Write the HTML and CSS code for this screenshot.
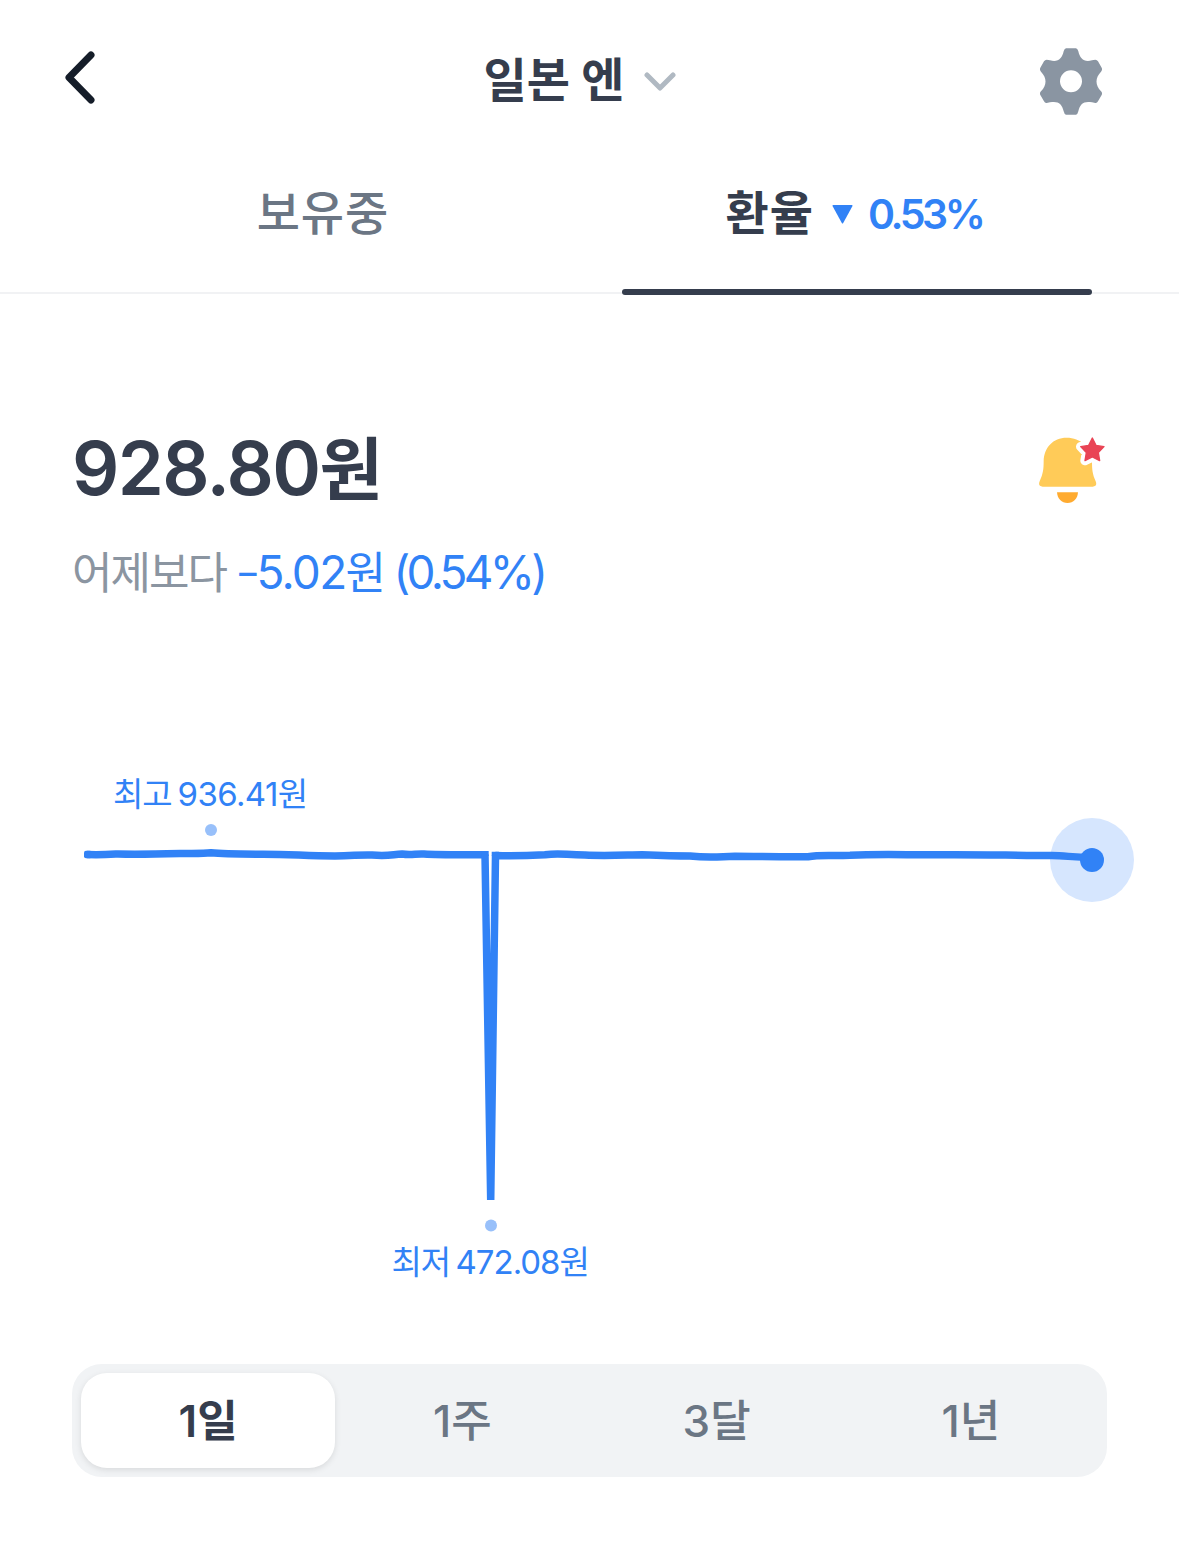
FILE: index.html
```html
<!DOCTYPE html>
<html lang="ko">
<head>
    <meta charset="UTF-8">
    <meta name="viewport" content="width=device-width, initial-scale=1.0">
    <title>일본 엔 환율</title>
    <link rel="stylesheet" href="styles.css">
</head>
<body>
    <header class="header">
        <svg class="back" viewBox="0 0 36 56">
            <path d="M28 5 L6 27.500 L28 50"/>
        </svg>
        <div class="title">
            <h1>일본 엔</h1>
            <svg class="chevron" viewBox="0 0 32 20">
                <path d="M3 3 L16 16 L29 3"/>
            </svg>
        </div>
        <svg class="gear" viewBox="60 56 186 199">
            <path fill-rule="evenodd" d="M138 56 H168 Q173 57 175 65 C180 88 192 98 216 92 L226 90 Q231 90 234 95 L245 114 Q248 120 243 126 C225 145 225 166 243 185 Q248 190 245 196 L234 215 Q231 221 226 220 L216 218 C192 213 180 222 175 245 Q173 254 168 255 H138 Q133 254 131 245 C126 222 114 213 90 218 L80 220 Q75 221 72 215 L61 196 Q58 190 63 185 C81 166 81 145 63 126 Q58 120 61 114 L72 95 Q75 90 80 90 L90 92 C114 98 126 88 131 65 Q133 57 138 56 Z M153 122 A33 33 0 1 0 153 188 A33 33 0 1 0 153 122 Z"/>
        </svg>
    </header>

    <nav class="tabs">
        <div class="tab"><span class="name">보유중</span></div>
        <div class="tab active">
            <span class="name">환율</span>
            <svg class="down" viewBox="0 0 20 19">
                <path d="M0.500 0 H19.500 Q20.300 0.300 20 1 L10.700 18 Q10 19 9.300 18 L0 1 Q-0.300 0.300 0.500 0 Z"/>
            </svg>
            <span class="rate">0.53%</span>
        </div>
    </nav>

    <main>
        <section class="summary">
            <div>
                <div class="price"><span class="num">928.80</span>원</div>
                <div class="diff">어제보다 <span class="blue"><span class="minus">−</span><span class="num">5.02</span>원 <span class="percent">(0.54%)</span></span></div>
            </div>
            <svg class="bell" viewBox="54 48 204 204">
                <path class="bell-body" d="M140 53 C99 53 72 83 71 123 C71 149 69 161 59 184 Q53 199 68 200 H218 Q233 199 227 184 C217 161 216 149 216 123 C215 83 181 53 140 53 Z"/>
                <path class="bell-clapper" d="M111 217 H174 C173 237 160 249 142.500 249 C125 249 112 237 111 217 Z"/>
                <path class="star-edge" d="M217 54 L228 76 L252 80 L235 98 L239 122 L217 111 L195 122 L199 98 L182 80 L206 76 Z"/>
                <path class="star" d="M217 54 L228 76 L252 80 L235 98 L239 122 L217 111 L195 122 L199 98 L182 80 L206 76 Z"/>
            </svg>
        </section>

        <svg class="chart" viewBox="0 760 1179 540">
            <circle class="halo" cx="1092" cy="860" r="42"/>
            <path class="line" d="M87 854.500 C100 855 108 854.500 118 854 C140 854.500 160 854 180 853.500 C192 853.200 202 853.700 211 852.700 C222 853.700 240 854 260 854.200 C290 854 305 856 335 856 C352 856 360 854.500 372 855 C388 856.500 392 854.500 402 854 C412 855.500 415 853.500 424 854 C440 855 460 854.700 485 854.700 L490.700 1200 L495.500 855.500 C515 856 530 855.500 545 854.800 C560 852.500 565 855 585 855 C605 856 625 855 642 854.800 C660 855.500 675 856 690 856 C710 858 720 856.500 735 856.300 C765 856.500 785 857 808 856.700 C820 854.500 830 856 850 855.200 C880 853.800 910 855 940 854.700 C980 854.300 1015 855.500 1052 855.500 C1066 855.500 1072 857.500 1092 857.500"/>
            <rect class="line-cap" x="84" y="850.800" width="8" height="7.500" rx="2"/>
            <path class="line-cap" d="M481.300 851 H488.700 V856 H481.300 Z M491.700 851.800 H499 V856 H491.700 Z"/>
            <circle class="now" cx="1092" cy="860" r="12"/>
            <circle class="point" cx="211" cy="830" r="6"/>
            <circle class="point" cx="491" cy="1225.500" r="6"/>
            <text x="113" y="805.500">최고 <tspan class="high" dx="-2.500">936.41</tspan>원</text>
            <text x="391.500" y="1273.500">최저 <tspan dx="-3">472.08</tspan>원</text>
        </svg>

        <div class="periods">
            <div class="period selected">1일</div>
            <div class="period">1주</div>
            <div class="period">3달</div>
            <div class="period">1년</div>
        </div>
    </main>
</body>
</html>
```

FILE: styles.css
```css
* {
    box-sizing: border-box;
}

body {
    font-family: Inter, 'Noto Sans CJK KR', sans-serif;
    margin: 0;
    background-color: #fff;
    color: #353d4d;
}

svg {
    display: block;
}

.header {
    display: grid;
    grid-template-columns: 1fr auto 1fr;
    align-items: center;
    height: 160px;
    padding: 0 77px 0 60px;
}

.back {
    width: 36px;
    height: 56px;
    margin: -4px 0 0 3px;
    fill: none;
    stroke: #151d29;
    stroke-width: 7;
    stroke-linecap: round;
    stroke-linejoin: round;
}

.title {
    display: flex;
    align-items: center;
    gap: 20px;
    margin-right: 2px;
}

h1 {
    margin: 0;
    font-size: 47px;
    font-weight: 600;
    line-height: 60px;
    letter-spacing: -0.2px;
}

.chevron {
    width: 32px;
    height: 20px;
    margin-top: 4px;
    fill: none;
    stroke: #b0b9c2;
    stroke-width: 5;
    stroke-linecap: round;
    stroke-linejoin: round;
}

.gear {
    width: 62px;
    height: 67px;
    margin-top: 3px;
    justify-self: end;
    fill: #8a95a2;
}

.tabs {
    display: grid;
    grid-template-columns: 1fr 1fr;
    gap: 64px;
    height: 134px;
    padding: 0 87px 0 88px;
    border-bottom: 2px solid #f1f2f4;
}

.tab {
    position: relative;
    display: flex;
    align-items: center;
    justify-content: center;
    height: 135px;
    padding-bottom: 27px;
    font-size: 47px;
    font-weight: 500;
    color: #6b7684;
}

.tab.active {
    padding-right: 6px;
    font-weight: 600;
    color: #353d4d;
}

.tab.active::after {
    content: "";
    position: absolute;
    left: 0;
    right: 0;
    bottom: 0;
    height: 6px;
    border-radius: 3px;
    background-color: #353d4d;
}

.name {
    margin-bottom: 9px;
    letter-spacing: 1px;
}

.down {
    width: 21px;
    height: 19px;
    margin: 1px 15px 0 18px;
    fill: #3182f6;
}

.rate {
    font-size: 41px;
    letter-spacing: -3.4px;
    color: #3182f6;
}

.summary {
    display: flex;
    justify-content: space-between;
    height: 466px;
    padding: 125px 73px 0 72px;
}

.price {
    font-size: 69px;
    font-weight: 600;
    line-height: 98px;
}

.price .num {
    font-size: 74px;
    letter-spacing: -1.6px;
}

.diff {
    margin-top: 3px;
    font-size: 44px;
    line-height: 100px;
    letter-spacing: -2px;
    color: #8b95a1;
}

.diff .num {
    font-size: 46px;
    letter-spacing: -1.7px;
}

.percent {
    margin-left: -1px;
    font-size: 46px;
    letter-spacing: -3.7px;
}

.minus {
    margin-left: -1px;
    font-size: 38px;
    line-height: 1;
    letter-spacing: -4px;
    vertical-align: 4px;
}

.blue {
    color: #3182f6;
}

.bell {
    width: 68px;
    height: 68px;
    margin-top: 17px;
}

.bell-body {
    fill: #ffcb58;
}

.bell-clapper {
    fill: #ffab30;
}

.star-edge {
    fill: #fff;
    stroke: #fff;
    stroke-width: 28;
    stroke-linejoin: round;
}

.star {
    fill: #e94455;
    stroke: #e94455;
    stroke-width: 4;
    stroke-linejoin: round;
}

.chart {
    width: 1179px;
    height: 540px;
}

.chart text {
    font-size: 33px;
    letter-spacing: -1px;
    fill: #3182f6;
}

.chart .high {
    letter-spacing: -0.6px;
}

.line {
    fill: none;
    stroke: #3182f6;
    stroke-width: 7.5;
    stroke-linejoin: bevel;
}

.line-cap,
.now {
    fill: #3182f6;
}

.point {
    fill: #98c0fa;
}

.halo {
    fill: #d6e6fe;
}

.periods {
    display: grid;
    grid-template-columns: repeat(4, 1fr);
    height: 113px;
    margin: 64px 72px 0;
    padding: 9px;
    border-radius: 30px;
    background-color: #f1f3f5;
}

.period {
    display: flex;
    align-items: center;
    justify-content: center;
    padding-bottom: 6px;
    border-radius: 26px;
    font-size: 44px;
    font-weight: 500;
    color: #6b7684;
}

.period.selected {
    background-color: #fff;
    box-shadow: 0 2px 6px rgba(0, 0, 0, 0.1);
    font-weight: 600;
    color: #353d4d;
}
```
